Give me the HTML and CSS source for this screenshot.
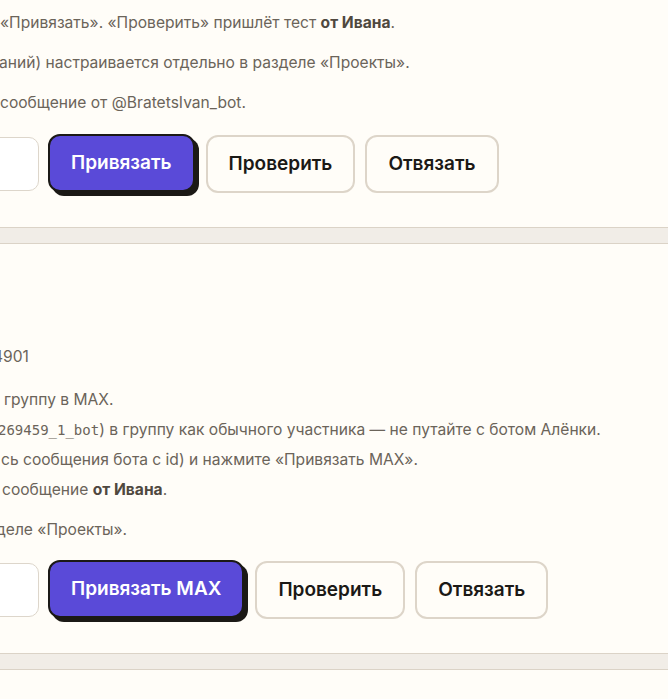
FILE: index.html
```html
<!DOCTYPE html>
<html lang="ru">
<head>
<meta charset="utf-8">
<title>Привязка ботов</title>
<link rel="stylesheet" href="styles.css">
</head>
<body>
<main class="page">
  <section class="card card-tg">
    <ul class="steps">
      <li class="line off-0">«Привязать». «Проверить» пришлёт тест <b>от Ивана</b>.</li>
    </ul>
    <p class="line off-m1">аний) настраивается отдельно в разделе «Проекты».</p>
    <p class="line off-0">сообщение от @BratetsIvan_bot.</p>
    <div class="actions">
      <div class="field"></div>
      <button class="btn btn-primary">Привязать</button>
      <button class="btn">Проверить</button>
      <button class="btn">Отвязать</button>
    </div>
  </section>

  <section class="card card-max">
    <p class="line status off-m7">4901</p>
    <ul class="steps">
      <li class="line off-p4">группу в MAX.</li>
      <li class="line off-m2"><code>269459_1_bot</code>) в группу как обычного участника — не путайте с ботом Алёнки.</li>
      <li class="line off-p1">сь сообщения бота с id) и нажмите «Привязать MAX».</li>
      <li class="line off-p2">сообщение <b>от Ивана</b>.</li>
    </ul>
    <p class="line off-m4">деле «Проекты».</p>
    <div class="actions">
      <div class="field"></div>
      <button class="btn btn-primary">Привязать MAX</button>
      <button class="btn">Проверить</button>
      <button class="btn">Отвязать</button>
    </div>
  </section>

  <section class="card card-next"></section>
</main>
</body>
</html>
```

FILE: styles.css
```css
html, body {
  margin: 0;
  padding: 0;
}

body {
  width: 668px;
  height: 699px;
  overflow: hidden;
  background: #f1ede7;
  font-family: Inter, "Noto Sans", sans-serif;
  color: #6b645a;
}

.page {
  display: flex;
  flex-direction: column;
  gap: 15px;
}

.card {
  background: #fffdf8;
  border-top: 1px solid #dbd3c7;
  border-bottom: 1px solid #dbd3c7;
}

.card-tg {
  border-top: 0;
  padding: 12px 0 34px;
}

.card-max {
  padding: 102px 0 34px;
}

.card-next {
  height: 60px;
  border-bottom: 0;
}

.line {
  font-size: 15.6px;
  line-height: 22px;
  white-space: nowrap;
  margin: 0;
}

.steps {
  list-style: none;
  margin: 0 0 18px;
  padding: 0;
}

.steps li + li {
  margin-top: 8px;
}

p.line {
  margin-bottom: 18px;
}

p.status {
  margin-bottom: 21px;
}

.line b {
  font-weight: 700;
  color: #4f483f;
}

.line code {
  font-family: "DejaVu Sans Mono", "Liberation Mono", monospace;
  font-size: 14px;
}

.off-0 { margin-left: 0; }
.off-m1 { margin-left: -1px; }
.off-m2 { margin-left: -2px; }
.off-m4 { margin-left: -4px; }
.off-m7 { margin-left: -7px; }
.off-p1 { margin-left: 1px; }
.off-p2 { margin-left: 2px; }
.off-p4 { margin-left: 4px; }

.actions {
  display: flex;
  align-items: center;
  gap: 10px;
  margin: 21px 0 0 -261px;
}

.card-max .actions {
  margin-top: 20px;
}

.field {
  width: 298px;
  height: 52px;
  background: #ffffff;
  border: 1px solid #ddd6cb;
  border-radius: 10px;
  flex: none;
}

.btn {
  flex: none;
  font-family: Inter, "Noto Sans", sans-serif;
  font-size: 19px;
  font-weight: 600;
  line-height: 22px;
  padding: 16px 21px;
  border: 2px solid #ddd5c9;
  border-radius: 12px;
  background: #fffdf8;
  color: #1b1916;
  cursor: pointer;
}

.btn-primary {
  background: #5a4ad8;
  border-color: #1b1916;
  color: #ffffff;
  box-shadow: 4px 4px 0 #1b1916;
  transform: translate(-1px, -1px);
}
```
